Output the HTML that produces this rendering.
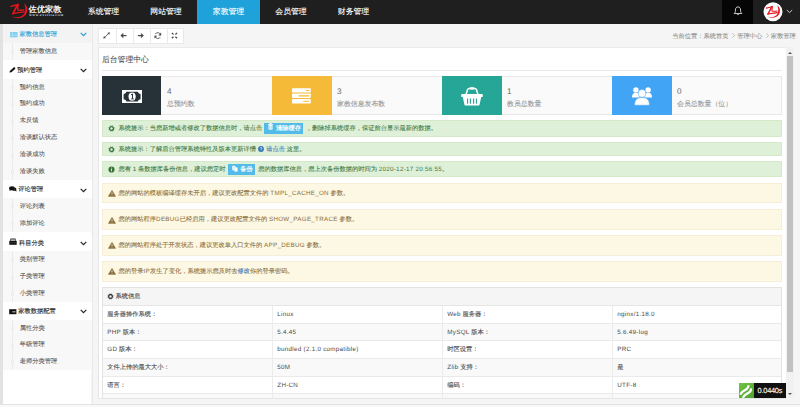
<!DOCTYPE html>
<html><head><meta charset="utf-8">
<style>
*{margin:0;padding:0;box-sizing:border-box}
html,body{width:800px;height:407px;overflow:hidden;background:#f5f5f5;font-family:"Liberation Sans",sans-serif;text-rendering:geometricPrecision}
.abs{position:absolute}
#top{position:absolute;left:0;top:0;width:800px;height:23.5px;background:#1f1f1f}
.nav{position:absolute;top:0;height:23.5px;width:62.6px;color:#fff;font-size:7.875px;-webkit-text-stroke:0.1px #fff;line-height:24.3px;text-align:center}
.nav.on{background:#1ea2d9}
#side{position:absolute;left:2.8px;top:23.5px;width:88.7px;height:380px;background:#fff}
.sh{position:absolute;left:0;width:89px;height:17.8px;font-size:6.25px;line-height:19.5px;color:#222;background:#fff;padding-left:16.5px;-webkit-text-stroke:0.1px #222}
.sh svg{position:absolute;left:6.5px;top:6px}
.sl{position:absolute;left:0;width:89px;background:#f8f8f8}
.ss{position:relative;height:16.95px;font-size:6.25px;line-height:18.2px;color:#555;padding-left:17px;-webkit-text-stroke:0.08px #555}
.sl5 .ss{height:16.6px}
.sl .vl{position:absolute;left:9.2px;top:0;bottom:0;width:0.7px;background:#ebebeb}
.ss i{position:absolute;left:7.95px;top:7.3px;width:3.2px;height:3.2px;border:0.5px solid #e6e6e6;border-radius:50%;background:#f8f8f8}
.sh .chev{position:absolute;left:77.5px;top:6px}
#main{position:absolute;left:98px;top:47px;width:687.8px;height:352px;background:#fff;border:0.7px solid #e6e6e6;border-top:0.8px solid #ebebeb;border-right:none}
.tb{position:absolute;top:27.5px;width:17.2px;height:16px;background:#fff;border:0.5px solid #e4e4e4}
.tb svg{position:absolute;left:4.5px;top:3.8px}
.stat{position:absolute;top:76px;height:38.8px;background:#fafafa;border:0.6px solid #e8e8e8;}
.ic{position:absolute;top:76px;width:59.3px;height:38.8px}
.ic svg{position:absolute}
.num{position:absolute;font-size:8.2px;color:#6a6a6a;line-height:10px;margin-top:0.5px}
.lbl{position:absolute;font-size:6.9px;color:#959595;line-height:8px;margin-top:0.6px;-webkit-text-stroke:0.08px #959595}
.al{position:absolute;left:102px;width:680px;font-size:6.25px;padding-left:15.6px;white-space:nowrap;-webkit-text-stroke:0.08px currentColor}
.al svg{position:absolute;left:7px}
.ag{background:#dff0d8;border:0.6px solid #d3e9c8;color:#3c763d}
.ay{background:#fcf8e3;border:0.6px solid #f6eed6;color:#8a6d3b}
.btn{display:inline-block;background:#52bbe9;color:#fff;height:11.6px;line-height:11.6px;padding:0 5px 0 4px;vertical-align:middle;margin:0 2px;-webkit-text-stroke:0.2px #fff}
#tbl{position:absolute;left:102px;top:286.6px;width:680px;height:111.7px;border:0.6px solid #e3e3e3;border-bottom:none;overflow:hidden}
.th{height:18.6px;background:#f5f5f5;font-size:6.25px;line-height:18.6px;color:#333;padding-left:12.6px;-webkit-text-stroke:0.08px #333;position:relative;border-bottom:0.6px solid #e6e6e6}
.tr{position:relative;height:17.65px;font-size:6.25px;color:#4a4a4a;line-height:17.65px;border-bottom:0.6px solid #eaeaea;-webkit-text-stroke:0.1px #4a4a4a}
.tr.odd{background:#f9f9f9}
.td{position:absolute;top:0;height:100%;width:170px;padding-left:4.3px}
.lt{letter-spacing:0.28px;-webkit-text-stroke:0}
.td.b{border-right:0.6px solid #ececec}
</style></head><body>
<div id="top">
  <!-- logo -->
  <svg class="abs" style="left:8px;top:1px" width="22" height="20" viewBox="0 0 22 20">
    <g fill="none" stroke="#e8141c" stroke-linecap="round">
      <path d="M3 5.4 Q6 4.6 9.6 3.8" stroke-width="1.4"/>
      <path d="M9.3 4.2 L4.8 12.8" stroke-width="1.7"/>
      <path d="M4.8 12.6 Q10 11.6 16.2 10.9" stroke-width="1.3"/>
      <path d="M10.2 3.2 L9.6 8.8 Q12 9.6 15.8 8.9" stroke-width="1.3"/>
    </g>
    <path d="M16.2 2.4 C19.5 4.5 20.2 9 18.5 12.5 C16.5 16.5 10 19 4 15.6 C10 17.5 14.5 15.5 16.4 12.2 C17.8 9.5 17.5 5.5 16.2 2.4 Z" fill="#e8141c"/>
  </svg>
  <div class="abs" style="left:28.5px;top:5px;font-family:'Liberation Serif',serif;font-weight:bold;font-size:8.2px;color:#f2f2f2;letter-spacing:0.1px;line-height:9px">佐优家教</div>
  <div class="abs" style="left:29px;top:14px;font-family:'Liberation Serif',serif;font-weight:bold;font-size:2.8px;color:#f0f0f0;letter-spacing:0.5px;line-height:3px">WWW.ZYJJ114.COM</div>
  <div class="nav" style="left:72.2px">系统管理</div>
  <div class="nav" style="left:134.7px">网站管理</div>
  <div class="nav on" style="left:197.2px">家教管理</div>
  <div class="nav" style="left:259.7px">会员管理</div>
  <div class="nav" style="left:322.2px">财务管理</div>
  <div class="abs" style="left:722px;top:0;width:31.3px;height:23.5px;background:#050505"></div>
  <svg class="abs" style="left:733px;top:6px" width="10" height="10" viewBox="0 0 10 10">
    <path d="M5 0.9 C3.2 0.9 2.4 2.3 2.4 4 L2.4 5.6 C2.4 6.3 1.6 7 1.1 7.5 L8.9 7.5 C8.4 7 7.6 6.3 7.6 5.6 L7.6 4 C7.6 2.3 6.8 0.9 5 0.9 Z" fill="none" stroke="#e6e6e6" stroke-width="0.85" stroke-linejoin="round"/>
    <path d="M4 8.2 C4.2 8.9 5.8 8.9 6 8.2" fill="none" stroke="#e6e6e6" stroke-width="0.8"/>
  </svg>
  <svg class="abs" style="left:763px;top:1.5px" width="20" height="20" viewBox="0 0 20 20">
    <circle cx="10" cy="9.8" r="9.5" fill="#fff"/>
    <g transform="translate(0.9 1.6) scale(0.83)">
    <g fill="none" stroke="#e8141c" stroke-linecap="round">
      <path d="M3 5.4 Q6 4.6 9.6 3.8" stroke-width="1.4"/>
      <path d="M9.3 4.2 L4.8 12.8" stroke-width="1.7"/>
      <path d="M4.8 12.6 Q10 11.6 16.2 10.9" stroke-width="1.3"/>
      <path d="M10.2 3.2 L9.6 8.8 Q12 9.6 15.8 8.9" stroke-width="1.3"/>
    </g>
    <path d="M16.2 2.4 C19.5 4.5 20.2 9 18.5 12.5 C16.5 16.5 10 19 4 15.6 C10 17.5 14.5 15.5 16.4 12.2 C17.8 9.5 17.5 5.5 16.2 2.4 Z" fill="#e8141c"/>
    </g>
  </svg>
  <svg class="abs" style="left:786px;top:9px" width="7" height="5" viewBox="0 0 7 5"><path d="M0.8 1 L3.5 3.6 L6.2 1" fill="none" stroke="#ddd" stroke-width="0.9"/></svg>
</div>

<div class="abs" style="left:0;top:23.5px;width:2.8px;height:380px;background:#e2e2e2"></div>
<div class="abs" style="left:91.5px;top:23.5px;width:1.2px;height:380px;background:#e9e9e9"></div>
<div id="side">
  <div class="sh" style="top:0;height:19.1px;line-height:21.9px;background:#f3f3f3;color:#1e9fd6;-webkit-text-stroke:0.1px #1e9fd6;padding-left:16.7px">
    <svg style="top:8.2px;left:7px" width="8" height="6" viewBox="0 0 8 6"><rect x="0" y="0" width="7.6" height="5.3" fill="#7fcdee"/><path d="M0 1.8H7.6M0 3.5H7.6M2.5 0V5.3" stroke="#c9e9f7" stroke-width="0.45"/></svg>家教信息管理
    <svg class="chev" width="7" height="5" style="top:8.3px" viewBox="0 0 7 5"><path d="M0.7 0.9 L3.5 3.6 L6.3 0.9" fill="none" stroke="#1e9fd6" stroke-width="1.2"/></svg>
  </div>
  <div class="sl" style="top:19.1px"><div class="vl"></div><div class="ss"><i></i>管理家教信息</div></div>
  <div class="sh" style="top:37.2px;padding-left:14.5px">
    <svg style="top:6.6px;left:6.4px" width="7" height="6" viewBox="0 0 7 6"><path d="M0.4 5.6 L0.9 4 L4.6 0.4 C5 0.1 5.4 0.1 5.8 0.5 L6.2 0.9 C6.5 1.3 6.5 1.6 6.1 2 L2.4 5.2 Z" fill="#111"/></svg>预约管理
    <svg class="chev" width="7" height="5" style="top:7.4px" viewBox="0 0 7 5"><path d="M0.7 0.9 L3.5 3.6 L6.3 0.9" fill="none" stroke="#222" stroke-width="1.2"/></svg>
  </div>
  <div class="sl" style="top:55px"><div class="vl"></div><div class="ss"><i></i>预约信息</div><div class="ss"><i></i>预约成功</div><div class="ss"><i></i>未反馈</div><div class="ss"><i></i>洽谈默认状态</div><div class="ss"><i></i>洽谈成功</div><div class="ss"><i></i>洽谈失败</div></div>
  <div class="sh" style="top:156.7px;padding-left:15.4px">
    <svg style="top:6.2px;left:6.4px" width="8" height="6" viewBox="0 0 8 6"><ellipse cx="3" cy="2.2" rx="2.9" ry="2" fill="#111"/><path d="M0.8 3.5 L0.3 5 L2.3 3.9Z" fill="#111"/><path d="M6.2 1.6 C7.3 2 7.6 3.2 7.2 4 L7.6 5.5 L6 4.7 C5 5 3.8 4.8 3.2 4.2 C5 4.2 6.3 3.2 6.2 1.6Z" fill="#111"/></svg>评论管理
    <svg class="chev" width="7" height="5" style="top:7.4px" viewBox="0 0 7 5"><path d="M0.7 0.9 L3.5 3.6 L6.3 0.9" fill="none" stroke="#222" stroke-width="1.2"/></svg>
  </div>
  <div class="sl" style="top:174.5px"><div class="vl"></div><div class="ss"><i></i>评论列表</div><div class="ss"><i></i>添加评论</div></div>
  <div class="sh" style="top:210px;padding-left:16.2px">
    <svg style="top:4.3px;left:6.7px" width="8" height="8" viewBox="0 0 8 8"><path d="M1.5 0.5 H6.5 L7.3 3 H0.7Z" fill="#333"/><rect x="1.6" y="1.6" width="4.8" height="1" fill="#fff"/><path d="M0.3 3 H7.7 V6.8 H0.3Z" fill="#111"/><rect x="0.3" y="4.6" width="7.4" height="0.5" fill="#555"/></svg>科目分类
    <svg class="chev" width="7" height="5" style="top:7.4px" viewBox="0 0 7 5"><path d="M0.7 0.9 L3.5 3.6 L6.3 0.9" fill="none" stroke="#222" stroke-width="1.2"/></svg>
  </div>
  <div class="sl" style="top:227.8px"><div class="vl"></div><div class="ss"><i></i>类别管理</div><div class="ss"><i></i>子类管理</div><div class="ss"><i></i>小类管理</div></div>
  <div class="sh" style="top:278.6px;padding-left:15.4px">
    <svg style="top:6.5px;left:6.7px" width="8" height="6" viewBox="0 0 8 6"><rect x="0.2" y="0.2" width="7.2" height="5" fill="#111"/><rect x="3.2" y="2" width="3.4" height="1" fill="#888"/><rect x="3.2" y="3.3" width="3.4" height="0.7" fill="#666"/></svg>家教数据配置
    <svg class="chev" width="7" height="5" style="top:7.4px" viewBox="0 0 7 5"><path d="M0.7 0.9 L3.5 3.6 L6.3 0.9" fill="none" stroke="#222" stroke-width="1.2"/></svg>
  </div>
  <div class="sl sl5" style="top:296.4px"><div class="vl"></div><div class="ss"><i></i>属性分类</div><div class="ss"><i></i>年级管理</div><div class="ss"><i></i>老师分类管理</div></div>
</div>

<!-- toolbar -->
<div class="abs" style="left:98.3px;top:27.5px;width:85.5px;height:16px;background:#fff;border:0.6px solid #e9e9e9"></div>
<div class="abs" style="left:115.5px;top:27.5px;width:0.6px;height:16px;background:#e9e9e9"></div>
<div class="abs" style="left:132.5px;top:27.5px;width:0.6px;height:16px;background:#e9e9e9"></div>
<div class="abs" style="left:149.5px;top:27.5px;width:0.6px;height:16px;background:#e9e9e9"></div>
<div class="abs" style="left:166.5px;top:27.5px;width:0.6px;height:16px;background:#e9e9e9"></div>
<svg class="abs" style="left:98.3px;top:27.5px" width="86" height="16" viewBox="0 0 86 16">
  <g fill="#4a4a4a" stroke="#4a4a4a">
    <path d="M5.9 10 L11.3 4.8" stroke-width="0.8" fill="none"/>
    <path d="M11.6 4.5 L9.6 4.9 L11.2 6.5Z M5.6 10.3 L6 8.3 L7.6 9.9Z" stroke-width="0.3"/>
    <path d="M23.6 7.6 H28.5" stroke-width="1.2" fill="none"/>
    <path d="M22.6 7.6 L25.2 5.2 V10Z" stroke-width="0.3"/>
    <path d="M39.8 7.6 H44.7" stroke-width="1.2" fill="none"/>
    <path d="M45.7 7.6 L43.1 5.2 V10Z" stroke-width="0.3"/>
    <path d="M62.4 6.6 A2.8 2.8 0 0 0 57.3 6.1" fill="none" stroke-width="0.85"/><path d="M57.2 8.6 A2.8 2.8 0 0 0 62.3 9.1" fill="none" stroke-width="0.85"/>
    <path d="M63.1 4.6 V7.4 H60.5Z M56.5 10.6 V7.8 H59.1Z" stroke-width="0.1"/>
    <path d="M73.8 4.9 L75.5 6.5 M79.1 4.9 L77.4 6.5 M73.8 10.3 L75.5 8.7 M79.1 10.3 L77.4 8.7" stroke-width="1.2" fill="none"/>
  </g>
</svg>

<!-- breadcrumb -->
<div class="abs" style="left:672.3px;top:32.8px;font-size:6.25px;color:#8a8a8a;line-height:8px;white-space:nowrap;-webkit-text-stroke:0.06px #8a8a8a">当前位置：系统首页<svg style="display:inline-block;vertical-align:0px;margin:0 2.1px 0 3.5px" width="3" height="5" viewBox="0 0 3 5"><path d="M0.4 0.3 L2.6 2.5 L0.4 4.7" fill="none" stroke="#999" stroke-width="0.6"/></svg>管理中心<svg style="display:inline-block;vertical-align:0px;margin:0 2.1px 0 3.5px" width="3" height="5" viewBox="0 0 3 5"><path d="M0.4 0.3 L2.6 2.5 L0.4 4.7" fill="none" stroke="#999" stroke-width="0.6"/></svg>家教管理</div>

<div id="main"></div>
<div class="abs" style="left:102px;top:55px;font-size:7.8px;color:#4a4a4a;line-height:9px;-webkit-text-stroke:0.08px #4a4a4a">后台管理中心</div>
<div class="abs" style="left:102px;top:70px;width:680px;height:0.7px;background:#e8e8e8"></div>

<!-- stats -->
<div class="stat" style="left:102px;width:680px"></div>
<div class="ic" style="left:102px;background:#263238"><svg style="left:19.8px;top:13.6px" width="20.2" height="13.2" viewBox="0 0 20.2 13.2"><rect x="0" y="0" width="20.2" height="13.2" fill="#fff"/><path d="M1.6 4 C3 4 4.2 3 4.3 1.8 H15.9 C16 3 17.2 4 18.6 4 V9.2 C17.2 9.2 16 10.2 15.9 11.4 H4.3 C4.2 10.2 3 9.2 1.6 9.2 Z" fill="#263238"/><ellipse cx="10.1" cy="6.6" rx="3.6" ry="4.2" fill="#fff"/><path d="M9 4.9 L10.5 4 V8.8 M9.2 8.9 H11.8" stroke="#263238" stroke-width="1" fill="none"/></svg></div>
<div class="num" style="left:167px;top:86px">4</div>
<div class="lbl" style="left:167px;top:100px">总预约数</div>
<div class="abs" style="left:272px;top:76.3px;width:0.6px;height:38.2px;background:#e8e8e8"></div>

<div class="ic" style="left:272.2px;width:59.6px;background:#f5ba37"><svg style="left:20.3px;top:11.6px" width="19" height="16" viewBox="0 0 19 16"><rect x="0" y="0.2" width="18.8" height="4.4" rx="0.9" fill="#fff"/><rect x="0" y="5.6" width="18.8" height="4.4" rx="0.9" fill="#fff"/><rect x="0" y="11" width="18.8" height="4.4" rx="0.9" fill="#fff"/><rect x="14" y="1.9" width="3.4" height="1.1" rx="0.5" fill="#f5ba37"/><rect x="6.6" y="7.3" width="10.8" height="1.1" rx="0.5" fill="#f5ba37"/><rect x="11.2" y="12.7" width="6.2" height="1.1" rx="0.5" fill="#f5ba37"/></svg></div>
<div class="num" style="left:337px;top:86px">3</div>
<div class="lbl" style="left:337px;top:100px">家教信息发布数</div>
<div class="abs" style="left:442px;top:76.3px;width:0.6px;height:38.2px;background:#e8e8e8"></div>

<div class="ic" style="left:442px;width:59.8px;background:#26a696"><svg style="left:19.2px;top:10.5px" width="22" height="19" viewBox="0 0 22 19"><path d="M5 7.5 L6.6 2.6 C6.9 1.8 7.4 1.5 8.2 1.5 H13.8 C14.6 1.5 15.1 1.8 15.4 2.6 L17 7.5" fill="none" stroke="#fff" stroke-width="1.5"/><rect x="8.5" y="0.3" width="5" height="2.2" rx="1" fill="#fff"/><rect x="0.2" y="7" width="21.6" height="3" rx="0.8" fill="#fff"/><path d="M1.8 10 H20.2 L18.6 17.6 C18.4 18.3 18 18.6 17.2 18.6 H4.8 C4 18.6 3.6 18.3 3.4 17.6 Z" fill="#fff"/><path d="M6.6 11.5 V16.8 M9.4 11.5 V16.8 M12.6 11.5 V16.8 M15.4 11.5 V16.8" stroke="#26a696" stroke-width="1.1"/></svg></div>
<div class="num" style="left:507px;top:86px">1</div>
<div class="lbl" style="left:507px;top:100px">教员总数量</div>
<div class="abs" style="left:612px;top:76.3px;width:0.6px;height:38.2px;background:#e8e8e8"></div>

<div class="ic" style="left:611.8px;width:60.3px;background:#42a4f4"><svg style="left:19.8px;top:10.8px" width="20" height="19" viewBox="0 0 20 19"><circle cx="3.9" cy="2.9" r="2.7" fill="#fff"/><circle cx="16.1" cy="2.9" r="2.7" fill="#fff"/><path d="M0 10.4 C0 7.2 1.5 5.8 3.9 5.8 C6.3 5.8 7.8 7.2 7.8 10.4 Z M12.2 10.4 C12.2 7.2 13.7 5.8 16.1 5.8 C18.5 5.8 20 7.2 20 10.4 Z" fill="#fff"/><circle cx="10" cy="6.4" r="3.9" fill="#fff" stroke="#42a4f4" stroke-width="0.5"/><path d="M2.6 18.2 C2.6 12.8 5 10.6 10 10.6 C15 10.6 17.4 12.8 17.4 18.2 Z" fill="#fff" stroke="#42a4f4" stroke-width="0.5"/></svg></div>
<div class="num" style="left:677px;top:86px">0</div>
<div class="lbl" style="left:677px;top:100px">会员总数量（位）</div>

<!-- alerts -->
<div class="al ag" style="top:120px;height:16.6px;line-height:15.4px"><svg style="top:4px;left:4.8px" width="7" height="7" viewBox="0 0 7 7"><circle cx="3.5" cy="3.5" r="1.9" fill="none" stroke="#3c763d" stroke-width="1.3"/><circle cx="3.5" cy="3.5" r="2.75" fill="none" stroke="#3c763d" stroke-width="0.7" stroke-dasharray="1.1 1.06"/></svg>系统提示：当您新增或者修改了数据信息时，请点击<span class="btn" style="margin-left:2.1px;margin-right:2.6px;padding-right:2.2px"><svg style="position:relative;left:0;top:0.9px;margin-right:2.6px" width="5" height="7" viewBox="0 0 5 7"><rect x="0" y="1" width="5" height="0.8" fill="#fff"/><rect x="1.5" y="0" width="2" height="1" fill="#fff"/><path d="M0.5 2 H4.5 V6.6 H0.5Z" fill="#fff"/><path d="M1.7 2.8 V5.8 M3.3 2.8 V5.8" stroke="#52bbe9" stroke-width="0.5"/></svg>清除缓存</span>，删除掉系统缓存，保证前台显示最新的数据。</div>
<div class="al ag" style="top:141.7px;height:14.7px;line-height:13.6px"><svg style="top:3.3px;left:4.8px" width="7" height="7" viewBox="0 0 7 7"><circle cx="3.5" cy="3.5" r="1.9" fill="none" stroke="#3c763d" stroke-width="1.3"/><circle cx="3.5" cy="3.5" r="2.75" fill="none" stroke="#3c763d" stroke-width="0.7" stroke-dasharray="1.1 1.06"/></svg>系统提示：了解后台管理系统特性及版本更新详情 <span style="color:#2f72b4"><svg style="position:relative;left:0;top:1.1px;margin-right:2.3px" width="6" height="6" viewBox="0 0 6 6"><circle cx="3" cy="3" r="2.9" fill="#2f72b4"/><path d="M2 2.3 C2 1.4 4 1.3 4 2.3 C4 3 3 3 3 3.8" fill="none" stroke="#fff" stroke-width="0.75"/><circle cx="3" cy="4.7" r="0.42" fill="#fff"/></svg>请点击</span> 这里。</div>
<div class="al ag" style="top:161.1px;height:16.2px;line-height:15px"><svg style="top:3.6px;left:4.5px" width="7" height="7" viewBox="0 0 7 7"><circle cx="3.5" cy="3.5" r="3.1" fill="#3c763d"/><path d="M3.5 3 V5.3" stroke="#dff0d8" stroke-width="0.9"/><circle cx="3.5" cy="1.9" r="0.5" fill="#dff0d8"/></svg>您有 1 条数据库备份信息，建议您定时<span class="btn" style="margin-left:2.5px;margin-right:3.5px;padding-right:2px"><svg style="position:relative;left:0;top:1px;margin-right:2.2px" width="6" height="7" viewBox="0 0 6 7"><path d="M0.3 0.8 H2.8 L3.8 1.8 V5.2 H0.3Z" fill="#fff"/><path d="M2.2 2 H4.8 L5.8 3 V6.7 H2.2Z" fill="#fff" stroke="#52bbe9" stroke-width="0.35"/></svg>备份</span>您的数据库信息，您上次备份数据的时间为 <span class="lt">2020-12-17 20:56:55</span>。</div>

<div class="al ay" style="top:183.1px;height:20.1px;line-height:19px"><svg style="top:6px;left:5.3px" width="8" height="7" viewBox="0 0 8 7"><path d="M4 0.3 L7.7 6.4 H0.3Z" fill="#8a6d3b" stroke="#8a6d3b" stroke-width="0.4" stroke-linejoin="round"/><path d="M4 2.4 V4.4" stroke="#fcf8e3" stroke-width="0.8"/><circle cx="4" cy="5.4" r="0.4" fill="#fcf8e3"/></svg>您的网站的模板编译缓存未开启，建议更改配置文件的 <span class="lt">TMPL_CACHE_ON</span> 参数。</div>
<div class="al ay" style="top:209.3px;height:20.6px;line-height:19.5px"><svg style="top:6.3px;left:5.3px" width="8" height="7" viewBox="0 0 8 7"><path d="M4 0.3 L7.7 6.4 H0.3Z" fill="#8a6d3b" stroke="#8a6d3b" stroke-width="0.4" stroke-linejoin="round"/><path d="M4 2.4 V4.4" stroke="#fcf8e3" stroke-width="0.8"/><circle cx="4" cy="5.4" r="0.4" fill="#fcf8e3"/></svg>您的网站程序<span class="lt">DEBUG</span>已经启用，建议更改配置文件的 <span class="lt">SHOW_PAGE_TRACE</span> 参数。</div>
<div class="al ay" style="top:235.4px;height:20.3px;line-height:19.3px"><svg style="top:6.1px;left:5.3px" width="8" height="7" viewBox="0 0 8 7"><path d="M4 0.3 L7.7 6.4 H0.3Z" fill="#8a6d3b" stroke="#8a6d3b" stroke-width="0.4" stroke-linejoin="round"/><path d="M4 2.4 V4.4" stroke="#fcf8e3" stroke-width="0.8"/><circle cx="4" cy="5.4" r="0.4" fill="#fcf8e3"/></svg>您的网站程序处于开发状态，建议更改单入口文件的 <span class="lt">APP_DEBUG</span> 参数。</div>
<div class="al ay" style="top:261px;height:20.7px;line-height:19.6px"><svg style="top:6.3px;left:5.3px" width="8" height="7" viewBox="0 0 8 7"><path d="M4 0.3 L7.7 6.4 H0.3Z" fill="#8a6d3b" stroke="#8a6d3b" stroke-width="0.4" stroke-linejoin="round"/><path d="M4 2.4 V4.4" stroke="#fcf8e3" stroke-width="0.8"/><circle cx="4" cy="5.4" r="0.4" fill="#fcf8e3"/></svg>您的登录<span class="lt">IP</span>发生了变化，系统提示您及时去<span style="color:#2f72b4">修改</span>你的登录密码。</div>

<!-- table -->
<div id="tbl">
  <div class="th"><svg class="abs" style="left:3.8px;top:5.4px" width="7" height="7" viewBox="0 0 7 7"><circle cx="3.5" cy="3.5" r="1.85" fill="none" stroke="#222" stroke-width="1.15"/><circle cx="3.5" cy="3.5" r="2.7" fill="none" stroke="#222" stroke-width="0.55" stroke-dasharray="1.06 1.06"/></svg>系统信息</div>
  <div class="tr"><div class="td b" style="left:0">服务器操作系统：</div><div class="td b" style="left:170px"><span class="lt">Linux</span></div><div class="td b" style="left:340px"><span class="lt">Web</span> 服务器：</div><div class="td" style="left:510px"><span class="lt">nginx/1.18.0</span></div></div>
  <div class="tr odd"><div class="td b" style="left:0"><span class="lt">PHP</span> 版本：</div><div class="td b" style="left:170px"><span class="lt">5.4.45</span></div><div class="td b" style="left:340px"><span class="lt">MySQL</span> 版本：</div><div class="td" style="left:510px"><span class="lt">5.6.49-log</span></div></div>
  <div class="tr"><div class="td b" style="left:0"><span class="lt">GD</span> 版本：</div><div class="td b" style="left:170px"><span class="lt">bundled (2.1.0 compatible)</span></div><div class="td b" style="left:340px">时区设置：</div><div class="td" style="left:510px"><span class="lt">PRC</span></div></div>
  <div class="tr odd"><div class="td b" style="left:0">文件上传的最大大小：</div><div class="td b" style="left:170px"><span class="lt">50M</span></div><div class="td b" style="left:340px"><span class="lt">Zlib</span> 支持：</div><div class="td" style="left:510px">是</div></div>
  <div class="tr"><div class="td b" style="left:0">语言：</div><div class="td b" style="left:170px"><span class="lt">ZH-CN</span></div><div class="td b" style="left:340px">编码：</div><div class="td" style="left:510px"><span class="lt">UTF-8</span></div></div>
  <div class="tr odd"><div class="td b" style="left:0"></div><div class="td b" style="left:170px"></div><div class="td b" style="left:340px"></div><div class="td" style="left:510px"></div></div>
</div>

<!-- scrollbar -->
<div class="abs" style="left:785.8px;top:47.2px;width:8.5px;height:351.1px;background:#f1f1f1"></div>
<div class="abs" style="left:786.8px;top:55.8px;width:6.6px;height:316.6px;background:#c1c1c1"></div>
<svg class="abs" style="left:787px;top:50.6px" width="6" height="4" viewBox="0 0 6 4"><path d="M1 3 L3 1 L5 3Z" fill="#555"/></svg>
<svg class="abs" style="left:787px;top:392px" width="6" height="4" viewBox="0 0 6 4"><path d="M1 1 L3 3 L5 1Z" fill="#555"/></svg>

<!-- trace badge -->
<svg class="abs" style="left:738.6px;top:383px" width="15.4" height="15.3" viewBox="0 0 15.4 15.3"><defs><linearGradient id="gg" x1="0" y1="0" x2="1" y2="1"><stop offset="0" stop-color="#6fc445"/><stop offset="1" stop-color="#4ea42c"/></linearGradient></defs><rect width="15.4" height="15.3" fill="url(#gg)"/><path d="M1.8 10.8 C3 8.2 5.5 7.8 7.5 6.2 C8.8 5.2 9.3 4.3 9.4 3.2" fill="none" stroke="#fff" stroke-width="2.3" stroke-linecap="round"/><path d="M4.4 14 C5.6 11.4 8.1 11 10.1 9.4 C11.4 8.4 11.9 7.5 12 6.4" fill="none" stroke="#fff" stroke-width="2.3" stroke-linecap="round"/></svg>
<div class="abs" style="left:754px;top:383px;width:31.8px;height:15.3px;background:#111;color:#fff;font-size:7.4px;line-height:15.6px;text-align:center;letter-spacing:-0.25px;-webkit-text-stroke:0.1px #fff">0.0440s</div>

<!-- bottom line -->
<div class="abs" style="left:0;top:405.2px;width:800px;height:2px;background:#f8f8f8"></div>
<div class="abs" style="left:0;top:403.6px;width:800px;height:1.6px;background:#e2e2e2"></div>
</body></html>
